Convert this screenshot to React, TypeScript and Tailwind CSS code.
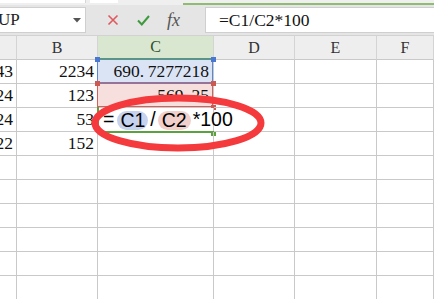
import React from 'react';

const serif = { fontFamily: '"Liberation Serif", "DejaVu Serif", serif' };
const sans = { fontFamily: '"Liberation Sans", Arial, sans-serif' };

const COLS = ['w-[17px]', 'w-[81px]', 'w-[116px]', 'w-[81px]', 'w-[82px]', 'flex-1'];

const rows: string[][] = [
  ['43', '2234', '690.7277218'],
  ['24', '123', '569.25'],
  ['24', '53', ''],
  ['22', '152', ''],
  ['', '', ''],
  ['', '', ''],
  ['', '', ''],
  ['', '', ''],
  ['', '', ''],
  ['', '', ''],
];

function Handle({ className }: { className: string }) {
  return <div className={`absolute w-[5px] h-[5px] ${className}`} />;
}

function Decimal({ value }: { value: string }) {
  const [a, b] = value.split('.');
  return (
    <span>
      {a}
      <span className="inline-block w-[8px]">.</span>
      {b}
    </span>
  );
}

function Editor() {
  return (
    <div className="absolute inset-0 z-20 flex items-center pl-[5px] whitespace-nowrap text-[19.5px] text-black" style={sans}>
      <span className="mr-[3px]">=</span>
      <span className="rounded-full bg-[#c6d3ef] px-[3px] leading-[19px]">C1</span>
      <span className="mx-[2px]">/</span>
      <span className="rounded-full bg-[#f1d0cb] px-[4px] leading-[19px]">C2</span>
      <span className="ml-[2px]">*100</span>
      <span className="ml-[1px] inline-block w-[1px] h-[20px] bg-black" />
    </div>
  );
}

function Cell({ col, row, text }: { col: number; row: number; text: string }) {
  const base = `${COLS[col]} h-[24px] shrink-0 relative flex items-center justify-end border-r border-b border-[#c9c9c9] text-[17.5px] text-[#111] leading-none`;
  if (col === 2 && row === 0) {
    return (
      <div className={`${base} bg-[#dbe4f5]`} style={serif}>
        <div className="absolute -left-px -top-px right-0 bottom-0 border border-[#5a86d6]" />
        <Handle className="-left-[3px] -top-[3px] bg-[#4a78d0]" />
        <Handle className="-right-[3px] -top-[3px] bg-[#4a78d0]" />
        <span className="relative pr-[4px]"><Decimal value={text} /></span>
      </div>
    );
  }
  if (col === 2 && row === 1) {
    return (
      <div className={`${base} bg-[#f6dfdc]`} style={serif}>
        <div className="absolute -left-px -top-px right-0 bottom-0 border border-[#d0625b]" />
        <Handle className="-left-[3px] -top-[3px] bg-[#cc5a52]" />
        <Handle className="-right-[3px] -top-[3px] bg-[#cc5a52]" />
        <Handle className="-right-[3px] -bottom-[3px] bg-[#cc5a52]" />
        <span className="relative pr-[4px]"><Decimal value={text} /></span>
      </div>
    );
  }
  if (col === 2 && row === 2) {
    return (
      <div className={`${base} bg-white !border-b-0`}>
        <div className="absolute -left-px -top-px right-0 -bottom-px border-l-2 border-b-2 border-[#5ca13f]" />
        <Handle className="-right-[3px] -bottom-[4px] bg-[#5ca13f]" />
        <Editor />
      </div>
    );
  }
  return (
    <div className={`${base} overflow-hidden`} style={serif}>
      {text && <span className="shrink-0 pr-[3px]">{text}</span>}
    </div>
  );
}

export default function App() {
  return (
    <div className="w-[434px] h-[299px] overflow-hidden bg-white relative select-none">
      {/* tab strip remnant */}
      <div className="h-[5px] bg-[#efefef] flex items-start">
        <div className="w-[86px] h-[3px] bg-white border-r border-[#d6d6d6]" />
        <div className="w-[4px]" />
        <div className="w-[28px] h-[3px] bg-white" />
        <div className="w-[65px]" />
        <div className="flex-1 h-[5px] flex flex-col justify-end">
          <div className="h-[2px] bg-[#8fbb72]" />
        </div>
      </div>

      {/* formula bar */}
      <div className="h-[31px] bg-[#e5e5e5] flex items-start pt-[2px] border-b border-[#d2d2d2]">
        <div className="w-[86px] h-[26px] bg-white border border-[#cfcfcf] border-l-0 flex items-center justify-between">
          <span className="text-[17px] text-[#222] -ml-[2px]" style={serif}>UP</span>
          <svg width="8" height="5" viewBox="0 0 8 5" className="mr-[4px]">
            <path d="M0 0h8L4 4.5z" fill="#555" />
          </svg>
        </div>
        <div className="w-[119px] h-[26px] flex items-center">
          <svg width="12" height="12" viewBox="0 0 12 12" className="ml-[21px]">
            <path d="M1.5 1.5l9 9M10.5 1.5l-9 9" stroke="#e0595c" strokeWidth="1.6" />
          </svg>
          <svg width="13" height="11" viewBox="0 0 13 11" className="ml-[18px]">
            <path d="M1 5.5l3.8 4L12 1" fill="none" stroke="#3d9a3d" strokeWidth="2" />
          </svg>
          <span className="ml-[17px] italic text-[18px] text-[#555]" style={serif}>fx</span>
        </div>
        <div className="flex-1 h-[26px] bg-white border border-r-0 border-[#cfcfcf] flex items-center pl-[13px]">
          <span className="text-[17.5px] text-[#111]" style={serif}>=C1/C2*100</span>
        </div>
      </div>

      {/* column headers */}
      <div className="flex h-[24px] bg-[#eeeeee]">
        {['', 'B', 'C', 'D', 'E', 'F'].map((h, i) => (
          <div
            key={i}
            className={`${COLS[i]} shrink-0 flex items-center justify-center border-r border-[#d4d4d4] text-[16px] ${
              h === 'C'
                ? 'bg-[#d9e7d0] border-b-2 border-b-[#5ca13f] text-[#2f4f2f]'
                : 'border-b border-b-[#c9c9c9] text-[#333]'
            }`}
            style={serif}
          >
            {h}
          </div>
        ))}
      </div>

      {/* grid */}
      <div className="relative">
        {rows.map((r, ri) => (
          <div key={ri} className="flex">
            {COLS.map((_, ci) => (
              <Cell key={ci} col={ci} row={ri} text={r[ci] ?? ''} />
            ))}
          </div>
        ))}

        {/* hand-drawn highlight ring */}
        <svg className="absolute left-0 top-0 z-30 pointer-events-none" width="434" height="240" viewBox="0 0 434 240">
          <ellipse cx="178" cy="63" rx="83" ry="25" fill="none" stroke="#f43a3c" strokeWidth="7" />
        </svg>
      </div>
    </div>
  );
}
